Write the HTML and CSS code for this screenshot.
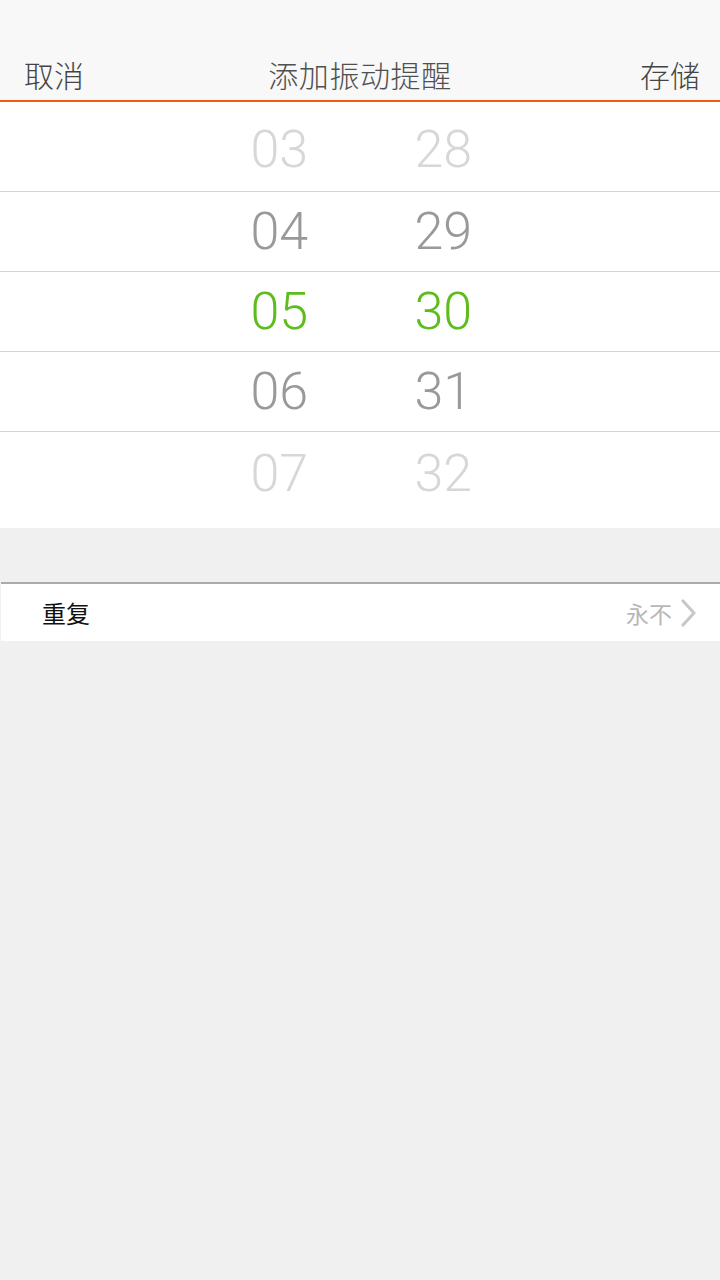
FILE: index.html
```html
<!DOCTYPE html>
<html lang="zh-CN">
<head>
<meta charset="utf-8">
<title>添加振动提醒</title>
<link rel="stylesheet" href="styles.css">
</head>
<body>
<div class="app">
  <header class="topbar">
    <span class="btn">取消</span>
    <span class="title">添加振动提醒</span>
    <span class="btn">存储</span>
  </header>
  <section class="picker">
    <div class="row r-first faint"><span>03</span><span>28</span></div>
    <div class="row mid"><span>04</span><span>29</span></div>
    <div class="row sel"><span>05</span><span>30</span></div>
    <div class="row mid"><span>06</span><span>31</span></div>
    <div class="row r-last faint"><span>07</span><span>32</span></div>
  </section>
  <div class="gap"></div>
  <section class="list">
    <div class="item">
      <span class="label">重复</span>
      <span class="value">永不
        <svg class="chev" width="18" height="28" viewBox="0 0 18 28"><path d="M3 2 L14 14 L3 26" fill="none" stroke="#c8c8c8" stroke-width="3.2" stroke-linecap="round" stroke-linejoin="round"/></svg>
      </span>
    </div>
  </section>
</div>
</body>
</html>
```
FILE: styles.css
```css
html, body {
  margin: 0;
  padding: 0;
  background: #f0f0f0;
}
body {
  font-family: "Noto Sans CJK SC", "Noto Sans", sans-serif;
}
.app {
  width: 720px;
  min-height: 1280px;
  background: #f0f0f0;
}
.topbar {
  background: #f8f8f8;
  border-bottom: 2px solid #f25a16;
  display: flex;
  justify-content: space-between;
  align-items: flex-end;
  padding: 0 20px 6px 24px;
  width: 676px;
  height: 94px;
}
.btn, .title {
  font-size: 30px;
  line-height: 40px;
  color: #444;
  font-weight: 300;
}
.title {
  color: #505050;
  letter-spacing: 0.6px;
  margin-right: 4px;
}
.picker {
  background: #fff;
  display: flex;
  flex-direction: column;
}
.row {
  box-sizing: border-box;
  display: flex;
  justify-content: center;
  gap: 108px;
  font-family: Roboto, "Noto Sans", sans-serif;
  font-weight: 300;
  font-size: 52px;
  height: 80px;
  align-items: center;
  border-bottom: 1px solid #d3d3d3;
  padding-left: 1px;
}
.row span {
  width: 56px;
  text-align: center;
}
.r-first {
  height: 90px;
  padding-top: 6px;
}
.r-last {
  border-bottom: none;
  height: 96px;
  align-items: flex-start;
  padding-top: 11px;
}
.faint { color: #d7d7d7; }
.mid { color: #999; }
.sel { color: #5cbd1c; }
.gap {
  height: 54px;
  background: #f0f0f0;
}
.list {
  background: #fff;
  border-top: 2px solid #aaa;
  margin-left: 1px;
}
.item {
  height: 57px;
  display: flex;
  align-items: center;
  justify-content: space-between;
  padding: 0 22px 0 41px;
}
.label {
  font-size: 24px;
  color: #111;
}
.value {
  font-size: 23px;
  color: #b8b8b8;
  display: flex;
  align-items: center;
  gap: 8px;
}
.chev {
  display: block;
}
```
